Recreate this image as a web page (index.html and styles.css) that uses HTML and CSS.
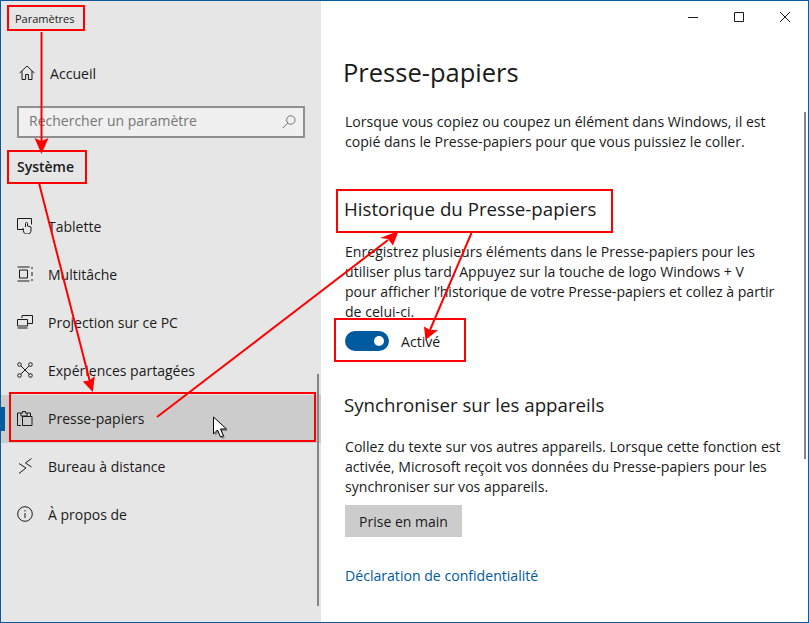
FILE: index.html

```html
<!DOCTYPE html>
<html lang="fr">
<head>
    <meta charset="UTF-8">
    <meta name="viewport" content="width=device-width, initial-scale=1.0">
    <title>Paramètres</title>
    <link rel="stylesheet" href="styles.css">
</head>
<body>
    <div class="window">
        <aside class="sidebar">
            <div class="app-title">Paramètres</div>
            <a class="home-link">
                <svg class="icon" viewBox="0 0 16 16"><path d="M.7 8 8 1l7.300 7M3 6v8.500h3.600v-5h2.800v5H13V6"/></svg>
                <span>Accueil</span>
            </a>
            <div class="search-box">
                <span>Rechercher un paramètre</span>
                <svg class="search-icon" viewBox="0 0 14 14"><circle cx="8.800" cy="5" r="4.200"/><path d="M5.800 8 .8 13"/></svg>
            </div>
            <div class="section-title">Système</div>
            <ul class="nav-list">
                <li class="nav-item">
                    <svg class="icon" viewBox="0 0 16 16"><path d="M7 11.500H.5V.5h14v6M8.500 9V5.500a1 1 0 0 1 2 0V8l3.500 1v3a3.800 3.800 0 0 1-7.600.5L6 10"/></svg>
                    <span>Tablette</span>
                </li>
                <li class="nav-item">
                    <svg class="icon" viewBox="0 0 16 16"><path d="M.5 1h12M.5 15h12M2.500 4h8v8h-8zM15 1v2M15 6v4M15 13v2"/></svg>
                    <span>Multitâche</span>
                </li>
                <li class="nav-item">
                    <svg class="icon" viewBox="0 0 16 16"><path d="M5 4V1.500h10.500v8H11M.5 5.500h10V12H.5zM.5 14h10"/></svg>
                    <span>Projection sur ce PC</span>
                </li>
                <li class="nav-item">
                    <svg class="icon" viewBox="0 0 16 16"><circle cx="2.500" cy="2.500" r="1.800"/><circle cx="13.500" cy="2.500" r="1.800"/><circle cx="2.500" cy="13.500" r="1.800"/><circle cx="13.500" cy="13.500" r="1.800"/><path d="m4 4 8 8M12 4l-8 8"/></svg>
                    <span>Expériences partagées</span>
                </li>
                <li class="nav-item active">
                    <svg class="icon" viewBox="0 0 16 16"><path d="M4 15.500H.5V3H4M10 3h3.500v3M5.500 3V1.500h3V3H10v3H4V3zM5.500 6.500H15v9H5.500z"/></svg>
                    <span>Presse-papiers</span>
                </li>
                <li class="nav-item">
                    <svg class="icon" viewBox="0 0 16 16"><path d="M2 5.500 9 10l-7 5.500M14.500.5 8.500 5l6 4"/></svg>
                    <span>Bureau à distance</span>
                </li>
                <li class="nav-item">
                    <svg class="icon" viewBox="0 0 16 16"><circle cx="8" cy="8" r="7.300"/><path d="M8 7v5M8 4v1.500"/></svg>
                    <span>À propos de</span>
                </li>
            </ul>
            <div class="scroll-thumb nav-thumb"></div>
        </aside>

        <main class="content">
            <div class="window-controls">
                <span class="win-btn"><svg viewBox="0 0 10 10"><path d="M0 5.500h10"/></svg></span>
                <span class="win-btn"><svg viewBox="0 0 10 10"><path d="M.5.5h9v9h-9z"/></svg></span>
                <span class="win-btn"><svg viewBox="0 0 10 10"><path d="m0 0 10 10M10 0 0 10"/></svg></span>
            </div>
            <h1>Presse-papiers</h1>
            <p class="intro">Lorsque vous copiez ou coupez un élément dans Windows, il est<br>copié dans le Presse-papiers pour que vous puissiez le coller.</p>

            <h2 class="history-title">Historique du Presse-papiers</h2>
            <p class="history-text">Enregistrez plusieurs éléments dans le Presse-papiers pour les<br>utiliser plus tard. Appuyez sur la touche de logo Windows + V<br>pour afficher l’historique de votre Presse-papiers et collez à partir<br>de celui-ci.</p>
            <div class="toggle-row">
                <span class="toggle"><span class="knob"></span></span>
                <span>Activé</span>
            </div>

            <h2 class="sync-title">Synchroniser sur les appareils</h2>
            <p class="sync-text">Collez du texte sur vos autres appareils. Lorsque cette fonction est<br>activée, Microsoft reçoit vos données du Presse-papiers pour les<br>synchroniser sur vos appareils.</p>
            <button class="start-btn">Prise en main</button>
            <a class="privacy-link">Déclaration de confidentialité</a>
            <div class="scroll-thumb content-thumb"></div>
        </main>

        <!-- annotations drawn over the screenshot -->
        <svg class="notes" viewBox="0 0 809 623">
            <g class="note-box">
                <rect x="8" y="6" width="76" height="24"/>
                <rect x="8" y="151" width="78" height="32"/>
                <rect x="10" y="393" width="305" height="48"/>
                <rect x="337" y="190" width="275" height="42"/>
                <rect x="335" y="319" width="130" height="42"/>
            </g>
            <g class="note-line">
                <path d="M41.500 32V145"/>
                <path d="M39 183 90 382"/>
                <path d="M157 417 388 240"/>
                <path d="M471.500 233 430 330"/>
            </g>
            <g class="note-head">
                <path d="m41.500 154-7-16 7 3 7-3z"/>
                <path d="m92.800 392-10-10.500 6.500-1 5.500-4.500z"/>
                <path d="m398.500 231-18.500 7 8 1 5 6.500z"/>
                <path d="m425.500 340-1.500-13.500 6 3.500h8z"/>
            </g>
            <path class="cursor-shadow" d="M215 419v17l4-4 3 7 3-1-3-7h6z"/>
            <path class="cursor" d="M213.500 417v17l4-4 3 7 3-1-3-7h6z"/>
        </svg>
    </div>
</body>
</html>
```

FILE: styles.css

```css
* {
    box-sizing: border-box;
}
body {
    margin: 0;
    font-family: "Open Sans", "Noto Sans", sans-serif;
    font-size: 14.1px;
    color: #1a1a1a;
    background: white;
}
.window {
    position: relative;
    display: flex;
    width: 809px;
    height: 623px;
    border: 1px solid #0b5a9e;
    overflow: hidden;
}
svg {
    fill: none;
    stroke: #1a1a1a;
    stroke-width: 1;
}

/* left column */
.sidebar {
    position: relative;
    width: 320px;
    flex-shrink: 0;
    background: #e6e6e6;
}
.app-title {
    font-size: 11px;
    padding: 10px 0 0 14px;
    height: 38px;
}
.home-link {
    display: flex;
    align-items: center;
    height: 48px;
    padding-left: 18px;
    margin-top: 10px;
}
.home-link span {
    margin-left: 15px;
}
.icon {
    width: 16px;
    height: 16px;
    flex-shrink: 0;
}
.search-box {
    display: flex;
    align-items: center;
    justify-content: space-between;
    width: 288px;
    height: 32px;
    margin: 9px 0 0 16px;
    padding: 0 7px 0 10px;
    border: 2px solid #8f8f8f;
    background: #f0f0f0;
    color: #767676;
}
.search-box span {
    font-size: 14px;
    margin-bottom: 4px;
}
.search-icon {
    width: 14px;
    height: 14px;
    stroke: #767676;
}
.section-title {
    font-size: 14px;
    font-weight: 600;
    padding-left: 16px;
    margin-top: 19px;
    line-height: 20px;
}
.nav-list {
    list-style: none;
    margin: 26px 0 0;
    padding: 0;
}
.nav-item {
    position: relative;
    display: flex;
    align-items: center;
    height: 48px;
    padding: 0 0 2px 16px;
    font-size: 14px;
}
.nav-item span {
    margin-left: 15px;
}
.nav-item.active {
    background: #cccccc;
}
.nav-item.active::before {
    content: "";
    position: absolute;
    left: 0;
    top: 12px;
    width: 4px;
    height: 24px;
    background: #005a9e;
}
.scroll-thumb {
    position: absolute;
    width: 2px;
    background: #858585;
}
.nav-thumb {
    top: 373px;
    bottom: 16px;
    left: 316px;
}

/* right column */
.content {
    position: relative;
    flex: 1;
    padding-left: 22px;
}
.window-controls {
    display: flex;
    justify-content: flex-end;
    height: 32px;
}
.win-btn {
    display: flex;
    align-items: center;
    justify-content: center;
    width: 46px;
    height: 32px;
}
.win-btn svg {
    width: 10px;
    height: 10px;
}
h1 {
    font-size: 25.5px;
    font-weight: 400;
    line-height: 36px;
    margin: 21px 0 0;
}
h2 {
    font-size: 18.7px;
    font-weight: 400;
    line-height: 26px;
    margin: 0;
    padding-left: 1px;
}
p {
    margin: 0;
    padding-left: 2px;
    line-height: 20px;
}
.intro {
    margin-top: 22px;
}
.history-title {
    margin-top: 44px;
}
.history-text {
    margin-top: 20px;
}
.toggle-row {
    display: flex;
    align-items: center;
    gap: 12px;
    height: 20px;
    margin: 9px 0 0 2px;
}
.toggle {
    display: flex;
    align-items: center;
    justify-content: flex-end;
    width: 44px;
    height: 20px;
    padding-right: 5px;
    border-radius: 10px;
    background: #005a9e;
}
.knob {
    width: 10px;
    height: 10px;
    border-radius: 50%;
    background: white;
}
.sync-title {
    margin-top: 41px;
}
.sync-text {
    margin-top: 19px;
}
.start-btn {
    display: block;
    width: 117px;
    height: 32px;
    margin: 8px 0 0 2px;
    border: none;
    background: #cccccc;
    color: #1a1a1a;
    font-family: inherit;
    font-size: 14px;
}
.privacy-link {
    display: block;
    margin: 29px 0 0 2px;
    line-height: 20px;
    color: #005a9e;
}
.content-thumb {
    top: 111px;
    height: 347px;
    right: 2px;
}

/* annotations */
.notes {
    position: absolute;
    left: -1px;
    top: -1px;
    width: 809px;
    height: 623px;
}
.note-box rect {
    stroke: #ff0000;
    stroke-width: 2;
}
.note-line path {
    stroke: #ff0000;
    stroke-width: 2;
}
.note-head path {
    fill: #ff0000;
    stroke: none;
}
.cursor {
    fill: white;
    stroke: black;
}
.cursor-shadow {
    fill: rgba(0,0,0,0.3);
    stroke: none;
}
```
